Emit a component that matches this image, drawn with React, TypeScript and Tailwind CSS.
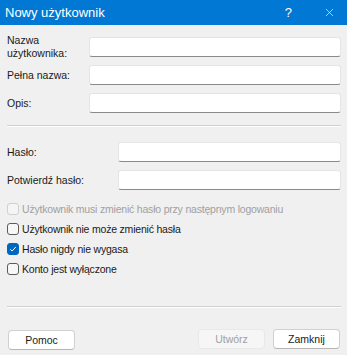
import { X } from "lucide-react";

const font = { fontFamily: '"Liberation Sans", Arial, sans-serif' };

const Field = ({ label, labelWidth }: { label: React.ReactNode; labelWidth: string }) => (
  <div className="flex h-[20px] items-center">
    <div className={`${labelWidth} shrink-0 text-[10.5px] leading-[13px] text-[#1a1a1a]`}>{label}</div>
    <input
      type="text"
      className="h-[20px] flex-1 min-w-0 bg-white border border-[#e5e5e5] border-b-[#8a8a8a] rounded-[3px] outline-none"
    />
  </div>
);

const Check = ({ label, checked, disabled }: { label: string; checked?: boolean; disabled?: boolean }) => (
  <div className="flex h-[20px] items-center">
    <span
      className={`flex h-[12px] w-[12px] shrink-0 items-center justify-center rounded-[3px] border ${
        checked
          ? "bg-[#0067c0] border-[#0067c0]"
          : disabled
          ? "bg-[#f5f5f5] border-[#d0d0d0]"
          : "bg-[#f7f7f7] border-[#5c5c5c]"
      }`}
    >
      {checked && (
        <svg width="8" height="8" viewBox="0 0 8 8" fill="none">
          <path d="M1.3 4.2 L3.1 6 L6.8 2" stroke="white" strokeWidth="1" />
        </svg>
      )}
    </span>
    <span
      className={`ml-[3px] whitespace-nowrap text-[10.5px] leading-[13px] tracking-[-0.2px] ${
        disabled ? "text-[#a0a0a0]" : "text-[#1a1a1a]"
      }`}
    >
      {label}
    </span>
  </div>
);

const Separator = () => <div className="h-[2px] border-t border-[#cfcfcf] border-b border-b-white" />;

const Btn = ({ children, disabled }: { children: string; disabled?: boolean }) => (
  <button
    className={`h-[20px] w-[67px] rounded-[4px] border text-[10.5px] leading-none ${
      disabled
        ? "bg-[#f6f6f6] border-[#e8e8e8] text-[#a0a0a0]"
        : "bg-white border-[#d0d0d0] border-b-[#b5b5b5] text-[#1a1a1a]"
    }`}
  >
    {children}
  </button>
);

export default function App() {
  return (
    <div className="w-[347px] h-[355px] bg-[#f0f0f0] overflow-hidden" style={font}>
      <div className="flex h-[25px] items-center bg-[#0078d4] text-white">
        <span className="pl-[5px] text-[13px]">Nowy użytkownik</span>
        <span className="ml-auto mr-[31px] text-[13px]">?</span>
        <X className="mr-[11px] h-[13px] w-[13px]" strokeWidth={1.2} />
      </div>

      <div className="pl-[7px] pr-[6px]">
        <div className="mt-[12px] flex flex-col gap-[8px]">
          <Field
            labelWidth="w-[82px]"
            label={
              <>
                Nazwa
                <br />
                użytkownika:
              </>
            }
          />
          <Field labelWidth="w-[82px]" label="Pełna nazwa:" />
          <Field labelWidth="w-[82px]" label="Opis:" />
        </div>

        <div className="mt-[12px]">
          <Separator />
        </div>

        <div className="mt-[15px] flex flex-col gap-[8px]">
          <Field labelWidth="w-[111px]" label="Hasło:" />
          <Field labelWidth="w-[111px]" label="Potwierdź hasło:" />
        </div>

        <div className="mt-[9px] flex flex-col">
          <Check label="Użytkownik musi zmienić hasło przy następnym logowaniu" disabled />
          <Check label="Użytkownik nie może zmienić hasła" />
          <Check label="Hasło nigdy nie wygasa" checked />
          <Check label="Konto jest wyłączone" />
        </div>

        <div className="mt-[27px]">
          <Separator />
        </div>

        <div className="mt-[19px] flex items-center">
          <div className="ml-[1px]">
            <Btn>Pomoc</Btn>
          </div>
          <div className="ml-auto mr-[1px] flex gap-[8px]">
            <Btn disabled>Utwórz</Btn>
            <Btn>Zamknij</Btn>
          </div>
        </div>
      </div>
    </div>
  );
}
